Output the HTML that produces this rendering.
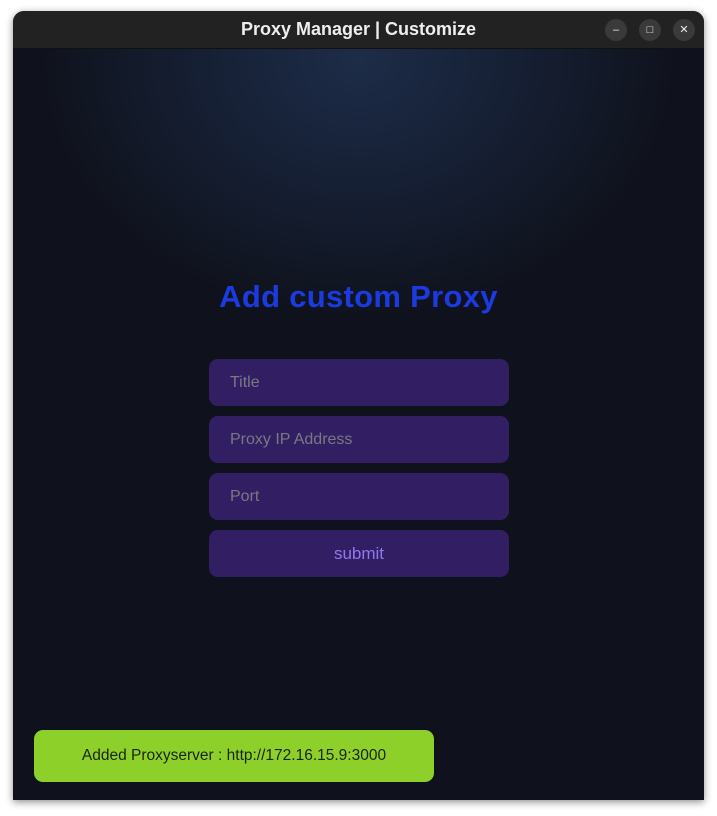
<!DOCTYPE html>
<html><head><meta charset="utf-8"><style>
html,body{margin:0;padding:0;width:717px;height:816px;background:#fff;overflow:hidden;font-family:"Liberation Sans",sans-serif}
.win{position:absolute;left:13px;top:11px;width:691px;height:789px;border-radius:11px 11px 0 0;overflow:hidden;box-shadow:0 2px 8px rgba(0,0,0,.45);background:#0f121c}
.tb{position:absolute;left:0;top:0;width:100%;height:37px;background:#222222;border-bottom:1px solid #111;color:#eee;font-size:18px;font-weight:bold;text-align:center;line-height:37px}
.btn{position:absolute;top:8px;width:22px;height:22px;border-radius:50%;background:#3a3a3a;color:#eee;font-size:11px;line-height:22px;text-align:center;font-weight:normal}
.content{position:absolute;left:0;top:38px;width:100%;height:751px;background:radial-gradient(ellipse 320px 260px at 345px 10px,#1d2c48 0%,#172238 40%,#0f121c 100%)}
h1{position:absolute;left:0;top:230px;width:100%;margin:0;text-align:center;color:#1b3be0;font-size:31px;font-weight:bold;letter-spacing:.3px}
.f{position:absolute;left:196px;width:300px;height:47px;border-radius:9px;background:#321f63;color:#7a7885;font-size:16px;line-height:47px;box-sizing:border-box;padding-left:21px}
.s{padding:0;text-align:center;color:#8f78f0;font-size:17px}
.toast{position:absolute;left:21px;top:681px;width:400px;height:52px;border-radius:9px;background:#8dd02a;color:#1b2410;font-size:15.5px;line-height:52px;text-align:center}
</style></head><body>
<div class="win">
<div class="tb">Proxy Manager | Customize
<div class="btn" style="left:592px">&#8211;</div>
<div class="btn" style="left:626px">&#9633;</div>
<div class="btn" style="left:660px">&#10005;</div>
</div>
<div class="content">
<h1>Add custom Proxy</h1>
<div class="f" style="top:310px">Title</div>
<div class="f" style="top:367px">Proxy IP Address</div>
<div class="f" style="top:424px">Port</div>
<div class="f s" style="top:481px">submit</div>
<div class="toast">Added Proxyserver : http://172.16.15.9:3000</div>
</div>
</div>
</body></html>
